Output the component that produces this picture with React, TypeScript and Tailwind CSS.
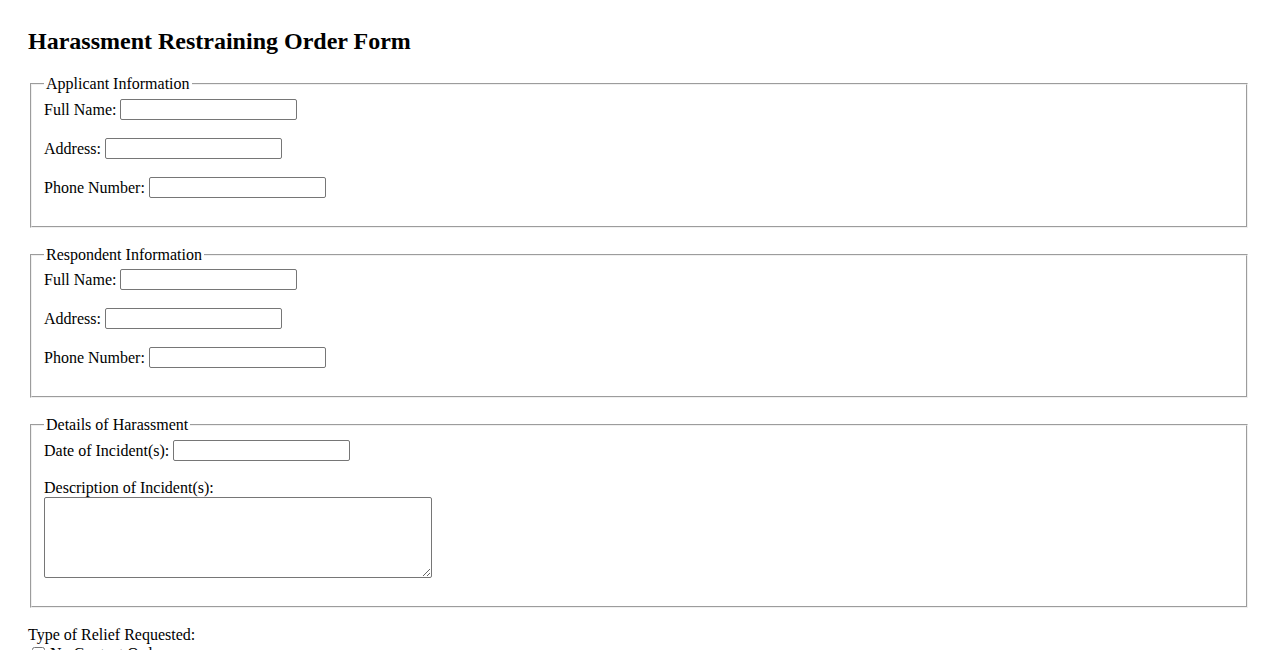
import React from "react";

const rows = ["Full Name:", "Address:", "Phone Number:"];

function Field({ label }: { label: string }) {
  return (
    <div className="flex items-center gap-1 h-[21px]">
      <label className="leading-[18px]">{label}</label>
      <input
        type="text"
        className="w-[177px] h-[21px] border border-[#767676] rounded-[2px] px-[2px] bg-white text-[13px]"
      />
    </div>
  );
}

function PartySection({ title, first }: { title: string; first?: boolean }) {
  return (
    <fieldset
      className={`mx-[2px] ${first ? "" : "mt-[18px]"} px-3 pb-[28px] border-2 [border-style:groove] border-[#f0f0f0]`}
    >
      <legend className="px-[2px] leading-[18px]">{title}</legend>
      <div className={`flex flex-col gap-[18px] ${first ? "mt-[6px]" : "mt-[5px]"}`}>
        {rows.map((r) => (
          <Field key={r} label={r} />
        ))}
      </div>
    </fieldset>
  );
}

export default function App() {
  return (
    <div className="min-h-screen bg-white text-black text-[16px] px-[28px] pt-[28px] pb-8 font-['Liberation_Serif','Times_New_Roman',serif]">
      <h2 className="text-[24px] font-bold leading-[27px] mb-[20px]">
        Harassment Restraining Order Form
      </h2>

      <form className="flex flex-col">
        <PartySection title="Applicant Information" first />
        <PartySection title="Respondent Information" />

        {/* Details */}
        <fieldset className="mx-[2px] mt-[18px] px-3 pb-[28px] border-2 [border-style:groove] border-[#f0f0f0]">
          <legend className="px-[2px] leading-[18px]">Details of Harassment</legend>
          <div className="flex flex-col gap-[18px] mt-[6px]">
            <Field label="Date of Incident(s):" />
            <div className="flex flex-col">
              <label className="leading-[18px]">Description of Incident(s):</label>
              <textarea className="w-[388px] h-[81px] border border-[#767676] rounded-[2px] px-[2px] text-[13px]" />
            </div>
          </div>
        </fieldset>

        <div className="mt-[18px] flex flex-col">
          <span className="leading-[18px]">Type of Relief Requested:</span>
          {["No Contact Order", "Stay Away Order", "Other Relief"].map((o) => (
            <label key={o} className="flex items-center gap-[2px] leading-[18px]">
              <input type="checkbox" className="w-[13px] h-[13px] ml-[4px] mr-[3px] my-[3px]" />
              {o}
            </label>
          ))}
        </div>

        <div className="mt-4">
          <button type="button" className="border border-[#767676] rounded-[2px] bg-[#efefef] px-[6px] py-[1px] text-[13px] font-['Liberation_Sans',sans-serif]">
            Submit
          </button>
        </div>
      </form>
    </div>
  );
}
